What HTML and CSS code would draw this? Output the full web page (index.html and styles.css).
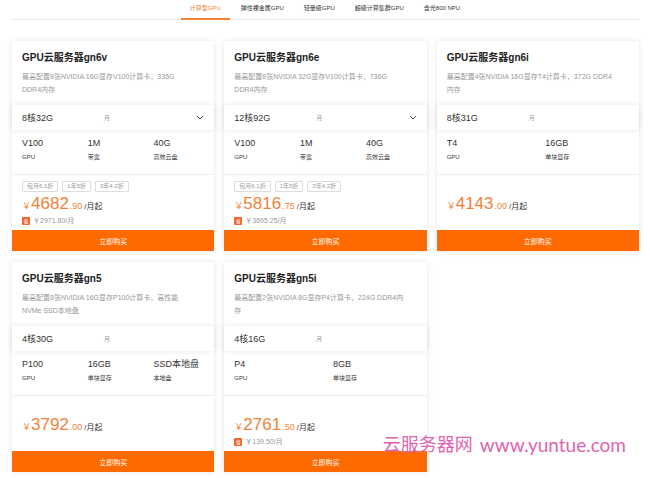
FILE: index.html
```html
<!DOCTYPE html>
<html lang="zh-CN">
<head>
    <meta charset="UTF-8">
    <meta name="viewport" content="width=device-width, initial-scale=1.0">
    <title>GPU云服务器</title>
    <link rel="stylesheet" href="styles.css">
</head>
<body>
    <nav class="tabs">
        <a class="tab active" href="#">计算型GPU</a>
        <a class="tab" href="#">弹性裸金属GPU</a>
        <a class="tab" href="#">轻量级GPU</a>
        <a class="tab" href="#">超级计算集群GPU</a>
        <a class="tab" href="#">含光800 NPU</a>
    </nav>

    <main class="cards">
        <section class="card">
            <div class="head">
                <h2 class="title">GPU云服务器gn6v</h2>
                <p class="desc">最高配置8张NVIDIA 16G显存V100计算卡，336G DDR4内存</p>
            </div>
            <div class="model">
                <select class="size" aria-label="gn6v 规格"><option>8核32G</option></select>
                <span class="unit">月</span>
                <svg class="arrow" viewBox="0 0 8 5"><path d="M1 1l3 3 3-3"/></svg>
            </div>
            <dl class="specs">
                <div class="spec"><dd>V100</dd><dt>GPU</dt></div>
                <div class="spec"><dd>1M</dd><dt>带宽</dt></div>
                <div class="spec"><dd>40G</dd><dt>高效云盘</dt></div>
            </dl>
            <div class="offer">
                <div class="tags"><span class="tag">包月6.1折</span><span class="tag">1年5折</span><span class="tag">3年4.2折</span></div>
                <div class="price"><span class="yen">￥</span><span class="amount">4682</span><span class="cents">.90</span><span class="per">/月起</span></div>
                <div class="saving"><span class="badge">省</span>￥2971.80/月</div>
            </div>
            <button class="buy">立即购买</button>
        </section>

        <section class="card">
            <div class="head">
                <h2 class="title">GPU云服务器gn6e</h2>
                <p class="desc">最高配置8张NVIDIA 32G显存V100计算卡，736G DDR4内存</p>
            </div>
            <div class="model">
                <select class="size" aria-label="gn6e 规格"><option>12核92G</option></select>
                <span class="unit">月</span>
                <svg class="arrow" viewBox="0 0 8 5"><path d="M1 1l3 3 3-3"/></svg>
            </div>
            <dl class="specs">
                <div class="spec"><dd>V100</dd><dt>GPU</dt></div>
                <div class="spec"><dd>1M</dd><dt>带宽</dt></div>
                <div class="spec"><dd>40G</dd><dt>高效云盘</dt></div>
            </dl>
            <div class="offer">
                <div class="tags"><span class="tag">包月6.1折</span><span class="tag">1年5折</span><span class="tag">3年4.2折</span></div>
                <div class="price"><span class="yen">￥</span><span class="amount">5816</span><span class="cents">.75</span><span class="per">/月起</span></div>
                <div class="saving"><span class="badge">省</span>￥3695.25/月</div>
            </div>
            <button class="buy">立即购买</button>
        </section>

        <section class="card">
            <div class="head">
                <h2 class="title">GPU云服务器gn6i</h2>
                <p class="desc">最高配置4张NVIDIA 16G显存T4计算卡，372G DDR4内存</p>
            </div>
            <div class="model">
                <span class="size">8核31G</span>
                <span class="unit">月</span>
            </div>
            <dl class="specs">
                <div class="spec"><dd>T4</dd><dt>GPU</dt></div>
                <div class="spec"><dd>16GB</dd><dt>单块显存</dt></div>
            </dl>
            <div class="offer">
                <div class="price"><span class="yen">￥</span><span class="amount">4143</span><span class="cents">.00</span><span class="per">/月起</span></div>
            </div>
            <button class="buy">立即购买</button>
        </section>

        <section class="card">
            <div class="head">
                <h2 class="title">GPU云服务器gn5</h2>
                <p class="desc">最高配置8张NVIDIA 16G显存P100计算卡，高性能NVMe SSD本地盘</p>
            </div>
            <div class="model">
                <span class="size">4核30G</span>
                <span class="unit">月</span>
            </div>
            <dl class="specs">
                <div class="spec"><dd>P100</dd><dt>GPU</dt></div>
                <div class="spec"><dd>16GB</dd><dt>单块显存</dt></div>
                <div class="spec"><dd>SSD本地盘</dd><dt>本地盘</dt></div>
            </dl>
            <div class="offer">
                <div class="price"><span class="yen">￥</span><span class="amount">3792</span><span class="cents">.00</span><span class="per">/月起</span></div>
            </div>
            <button class="buy">立即购买</button>
        </section>

        <section class="card">
            <div class="head">
                <h2 class="title">GPU云服务器gn5i</h2>
                <p class="desc">最高配置2张NVIDIA 8G显存P4计算卡，224G DDR4内存</p>
            </div>
            <div class="model">
                <span class="size">4核16G</span>
                <span class="unit">月</span>
            </div>
            <dl class="specs">
                <div class="spec"><dd>P4</dd><dt>GPU</dt></div>
                <div class="spec"><dd>8GB</dd><dt>单块显存</dt></div>
            </dl>
            <div class="offer">
                <div class="price"><span class="yen">￥</span><span class="amount">2761</span><span class="cents">.50</span><span class="per">/月起</span></div>
                <div class="saving"><span class="badge">省</span>￥139.50/月</div>
            </div>
            <button class="buy">立即购买</button>
        </section>
    </main>

    <div class="watermark"><span class="mark-name">云服务器网</span><span class="mark-url">www.yuntue.com</span></div>
</body>
</html>
```

FILE: styles.css
```css
* {
    box-sizing: border-box;
}
body {
    position: relative;
    margin: 0;
    padding: 0 11px 6px 12px;
    background-color: #fff;
    color: #333;
    font-family: "Liberation Sans", "Noto Sans CJK SC", sans-serif;
    font-size: 6px;
}
h2, p, dl, dd, dt {
    margin: 0;
}

/* tabs */
.tabs {
    display: flex;
    justify-content: center;
    gap: 2px;
    height: 20px;
    margin-bottom: 21px;
    padding-right: 1px;
    box-shadow: inset 0 -1px 0 #e8e8e8;
}
.tab {
    padding: 0 9px;
    line-height: 16px;
    color: #333;
    text-decoration: none;
}
.tab.active {
    color: #f08238;
    border-bottom: 2px solid #f08238;
}

/* cards */
.cards {
    display: grid;
    grid-template-columns: repeat(3, 1fr);
    gap: 11px 10px;
}
.card {
    display: flex;
    flex-direction: column;
    background-color: #fff;
    box-shadow: 0 0 6px rgba(0, 0, 0, 0.1);
}
.head {
    padding: 10px 21px 9px 10px;
}
.title {
    margin-bottom: 5px;
    font-size: 10px;
    line-height: 14px;
    color: #222;
}
.desc {
    font-size: 7px;
    line-height: 13px;
    color: #999;
}
.model {
    display: flex;
    align-items: center;
    height: 25px;
    padding: 0 10px;
    background-color: #fff;
    box-shadow: 0 0 6px rgba(0, 0, 0, 0.1);
}
.size {
    flex: 0 0 82px;
    margin: 0;
    padding: 0;
    border: none;
    background: none;
    appearance: none;
    color: #333;
    font-family: inherit;
    font-size: 9px;
}
.unit {
    color: #999;
}
.arrow {
    width: 8px;
    height: 5px;
    margin-left: auto;
    fill: none;
    stroke: #444;
}

/* specs */
.specs {
    display: flex;
    gap: 5px;
    padding: 7px 0 12px 10px;
    border-bottom: 1px solid #eee;
}
.spec {
    display: flex;
    flex: 1 1 0;
    flex-direction: column;
    gap: 3px;
}
.spec dd {
    font-size: 9px;
    line-height: 12px;
    white-space: nowrap;
}
.spec dt {
    line-height: 10px;
}

/* price */
.offer {
    display: grid;
    grid-template-rows: 11px 20px 10px;
    row-gap: 2px;
    padding: 6px 10px 4px;
}
.tags {
    display: flex;
    gap: 4px;
}
.tag {
    padding: 0 4px;
    border: 1px solid #ddd;
    border-radius: 1px;
    line-height: 9px;
    color: #999;
}
.price {
    grid-row: 2;
    display: flex;
    align-items: baseline;
    line-height: 20px;
    color: #f08238;
}
.yen {
    font-size: 9px;
}
.amount {
    font-size: 17px;
}
.cents {
    margin-left: 1px;
    font-size: 9px;
}
.per {
    margin-left: 2px;
    font-size: 8px;
    color: #333;
}
.saving {
    grid-row: 3;
    display: flex;
    align-items: center;
    gap: 3px;
    font-size: 7px;
    line-height: 10px;
    color: #999;
}
.badge {
    width: 8px;
    border-radius: 1px;
    background-color: #f0642d;
    color: #fff;
    font-size: 5px;
    line-height: 8px;
    text-align: center;
}
.buy {
    height: 21px;
    padding: 0;
    border: none;
    background-color: #ff6a00;
    color: #fff;
    font-family: inherit;
    font-size: 7px;
    cursor: pointer;
}

/* site mark over the last row */
.watermark {
    position: absolute;
    right: 24px;
    bottom: 20px;
    display: flex;
    align-items: center;
    gap: 7px;
    color: #df62ae;
    line-height: 26px;
}
.mark-name {
    font-size: 18px;
}
.mark-url {
    font-family: Lato, sans-serif;
    font-size: 19px;
}
```
